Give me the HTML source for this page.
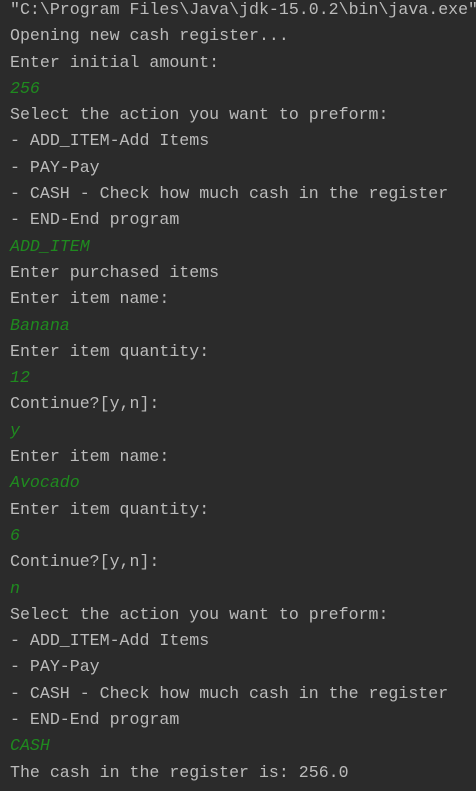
<!DOCTYPE html>
<html><head><style>
html,body{margin:0;padding:0;background:#2b2b2b;width:476px;height:791px;overflow:hidden}
pre{margin:-3px 0 0 10px;font-family:"Liberation Mono",monospace;font-size:16.6px;line-height:26.3px;color:#bbbbbb;white-space:pre}
i{color:#1f8a1f;font-style:italic}
</style></head><body><pre>"C:\Program Files\Java\jdk-15.0.2\bin\java.exe"
Opening new cash register...
Enter initial amount:
<i>256</i>
Select the action you want to preform:
- ADD_ITEM-Add Items
- PAY-Pay
- CASH - Check how much cash in the register
- END-End program
<i>ADD_ITEM</i>
Enter purchased items
Enter item name:
<i>Banana</i>
Enter item quantity:
<i>12</i>
Continue?[y,n]:
<i>y</i>
Enter item name:
<i>Avocado</i>
Enter item quantity:
<i>6</i>
Continue?[y,n]:
<i>n</i>
Select the action you want to preform:
- ADD_ITEM-Add Items
- PAY-Pay
- CASH - Check how much cash in the register
- END-End program
<i>CASH</i>
The cash in the register is: 256.0</pre></body></html>
